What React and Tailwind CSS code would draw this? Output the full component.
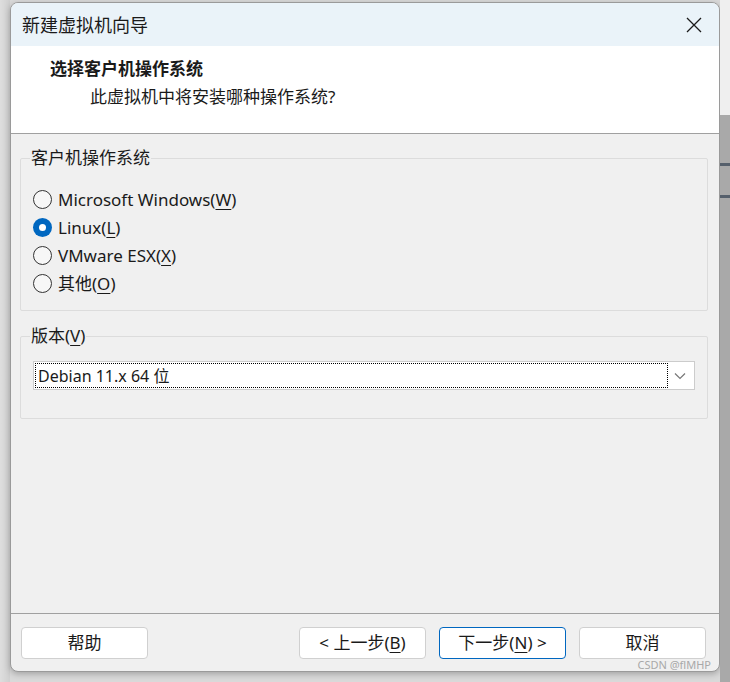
import React from "react";

const radios = [
  { label: "Microsoft Windows(", key: "W", checked: false },
  { label: "Linux(", key: "L", checked: true },
  { label: "VMware ESX(", key: "X", checked: false },
  { label: "其他(", key: "O", checked: false },
];

function Radio({ checked }) {
  if (checked) {
    return (
      <span className="w-[19px] h-[19px] rounded-full bg-[#0067c0] flex items-center justify-center shrink-0">
        <span className="w-[7px] h-[7px] rounded-full bg-white" />
      </span>
    );
  }
  return <span className="w-[19px] h-[19px] rounded-full border border-[#333] bg-[#f7f7f7] shrink-0" />;
}

function Btn({ children, primary }) {
  return (
    <button
      className={
        primary
          ? "w-[127px] h-[32px] rounded-[4px] bg-white border border-[#0067c0] text-[17px] text-[#1a1a1a] flex items-center justify-center"
          : "w-[127px] h-[32px] rounded-[4px] bg-white border border-[#d0d0d0] text-[17px] text-[#1a1a1a] flex items-center justify-center"
      }
    >
      {children}
    </button>
  );
}

export default function App() {
  return (
    <div className="w-[730px] h-[682px] flex bg-[#d9d9d9] font-['Noto_Sans','Noto_Sans_CJK_SC',sans-serif] text-[#1a1a1a] overflow-hidden">
      {/* left strip */}
      <div className="w-[10px] shrink-0 bg-gradient-to-r from-[#dedede] to-[#cfcfcf]" />

      {/* WINDOW */}
      <div className="w-[710px] h-[670px] mt-[2px] shrink-0 flex flex-col rounded-[8px] border border-[#9a9a9a] bg-[#f0f0f0] overflow-hidden shadow-[0_2px_6px_rgba(0,0,0,0.25)]">
        {/* title bar */}
        <div className="h-[43px] shrink-0 bg-[#eaf3f9] flex items-center justify-between pl-[11px] pr-[16px]">
          <span className="text-[18px] leading-none">新建虚拟机向导</span>
          <svg width="18" height="18" viewBox="0 0 18 18">
            <path d="M2 2 L16 16 M16 2 L2 16" stroke="#1a1a1a" strokeWidth="1.3" fill="none" />
          </svg>
        </div>

        {/* header */}
        <div className="h-[88px] shrink-0 bg-white border-b border-[#a0a0a0] flex flex-col pt-[13px]">
          <div className="pl-[39px] text-[17px] font-bold leading-[20px]">选择客户机操作系统</div>
          <div className="pl-[79px] mt-[8px] text-[17px] leading-[20px]">此虚拟机中将安装哪种操作系统?</div>
        </div>

        {/* body */}
        <div className="flex-1 flex flex-col pl-[9px] pr-[11px] pt-[13px]">
          <fieldset className="h-[164px] border border-[#dcdcdc] rounded-[2px] px-[12px] pt-[19px] mx-0">
            <legend className="px-[1px] ml-[-3px] text-[17px] leading-[22px]">客户机操作系统</legend>
            <div className="flex flex-col gap-[5px]">
              {radios.map((r) => (
                <div key={r.key} className="flex items-center gap-[6px] h-[23px]">
                  <Radio checked={r.checked} />
                  <span className="text-[17px] leading-none">
                    {r.label}
                    <span className="underline underline-offset-[3px]">{r.key}</span>)
                  </span>
                </div>
              ))}
            </div>
          </fieldset>

          <fieldset className="h-[94px] mt-[14px] border border-[#dcdcdc] rounded-[2px] px-[12px] pt-[14px]">
            <legend className="px-[1px] ml-[-3px] text-[17px] leading-[22px]">
              版本(<span className="underline underline-offset-[3px]">V</span>)
            </legend>
            <div className="h-[29px] bg-white border border-[#cccccc] flex items-center pl-[1px] pr-[8px]">
              <div className="h-[25px] w-[633px] border border-dotted border-[#000] flex items-center pl-[2px] text-[16px] leading-none">
                Debian 11.x 64 位
              </div>
              <div className="flex-1 flex justify-end">
                <svg width="12" height="8" viewBox="0 0 12 8">
                  <path d="M1 1.5 L6 6.5 L11 1.5" stroke="#777" strokeWidth="1.2" fill="none" />
                </svg>
              </div>
            </div>
          </fieldset>

          <div className="flex-1" />
        </div>

        {/* footer */}
        <div className="h-[58px] shrink-0 border-t border-[#a0a0a0] flex items-start pt-[13px] pl-[10px] pr-[13px]">
          <Btn>帮助</Btn>
          <div className="flex-1" />
          <div className="flex gap-[13px]">
            <Btn>
              &lt; 上一步(<span className="underline underline-offset-[3px]">B</span>)
            </Btn>
            <Btn primary>
              下一步(<span className="underline underline-offset-[3px]">N</span>) &gt;
            </Btn>
            <Btn>取消</Btn>
          </div>
        </div>
        <div className="h-[0px] relative">
          <span className="absolute right-[8px] bottom-[1px] text-[11px] leading-none text-[#a8a8a8]">CSDN @flMHP</span>
        </div>
      </div>

      {/* right strip */}
      <div className="flex-1 flex flex-col">
        <div className="h-[115px] bg-[#efefef]" />
        <div className="flex-1 bg-[#a9a9a9] flex flex-col">
          <div className="h-[48px]" />
          <div className="h-[3px] bg-[#56606c]" />
          <div className="h-[29px]" />
          <div className="h-[3px] bg-[#56606c]" />
        </div>
      </div>
    </div>
  );
}
